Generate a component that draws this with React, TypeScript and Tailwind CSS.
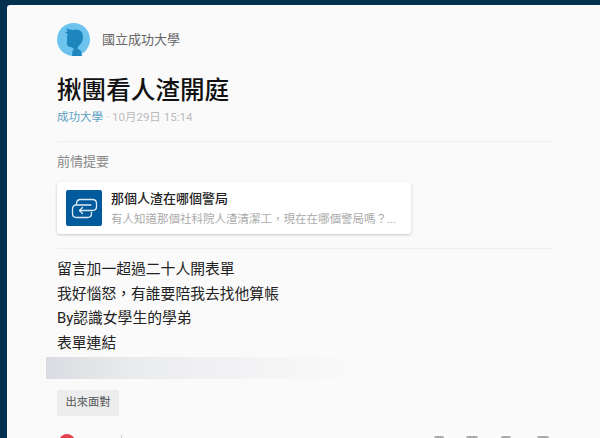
const font = { fontFamily: '"Roboto", "Noto Sans CJK TC", sans-serif' }

function Avatar() {
  return (
    <svg viewBox="0 0 33 33" className="h-[33px] w-[33px] shrink-0">
      <circle cx="16.5" cy="16.5" r="16.5" fill="#6cc3ee" />
      <path
        d="M9 5.500 L15.500 7 C21 5 26.500 8 26 14 C26 18 24.500 21 21.500 23 L20.500 25.500 L24 28 L25 33 L15 33 L15.500 28 L17 26 L14 24 C11 24 9.500 22 10 19 C10.500 16 9.500 13.500 10.500 11 L8 9 L11 8.500 Z"
        fill="#1f86bd"
      />
    </svg>
  )
}

function LinkIcon() {
  return (
    <div className="flex h-9 w-9 shrink-0 items-center justify-center rounded-[2px] bg-[#005a9c]">
      <svg viewBox="0 0 36 36" className="h-9 w-9" fill="none" stroke="#dfeaf3" strokeWidth="1.3" strokeLinecap="round" strokeLinejoin="round">
        <path d="M10.500 14 C10.500 11 12 9.500 14.500 9.500 H26.500 C29 9.500 30.500 11 30.500 13.500 V16.500 C30.500 19 29 20.500 26.500 20.500 H13.500" />
        <path d="M25 15 H10.500 C8 15 6.500 16.500 6.500 19 V23.500 C6.500 26 8 27.500 10.500 27.500 H21.500 C24 27.500 25.500 26 25.500 23.500 V22.500" />
        <path d="M16.500 17.500 L13.500 20.500 L16.500 23.500" />
      </svg>
    </div>
  )
}

export default function App() {
  return (
    <div className="h-[438px] w-[600px] overflow-hidden bg-[#02304f] pl-[7px] pt-[5px]" style={font}>
      <div className="h-[433px] w-[593px] rounded-tl-[3px] bg-[#fafafa] pl-[50px] pr-[48px] pt-[18px]">
        <div className="flex items-center gap-[12px]">
          <Avatar />
          <span className="text-[13px] leading-[17px] text-[#666]">國立成功大學</span>
        </div>

        <h1 className="mt-[18px] text-[24.6px] font-medium leading-[34px] text-[#111]">揪團看人渣開庭</h1>
        <div className="mt-[2px] text-[11.5px] leading-[15px] text-[#bbb]">
          <span className="text-[#5a9fc4]">成功大學</span>
          <span className="mx-[3px]">·</span>10月29日 15:14
        </div>

        <div className="mt-[16px] border-t border-[#eee] pt-[11px]">
          <div className="text-[13px] leading-[17px] text-[#888]">前情提要</div>
          <div className="mt-[12px] flex h-[52px] w-[354px] items-center gap-[9px] rounded-[3px] bg-white pl-[9px] shadow-[0_1px_3px_rgba(0,0,0,0.2)]">
            <LinkIcon />
            <div className="min-w-0">
              <div className="text-[13px] font-medium leading-[17px] text-[#222]">那個人渣在哪個警局</div>
              <div className="mt-[5px] whitespace-nowrap text-[11.5px] leading-[15px] text-[#aaa]">有人知道那個社科院人渣清潔工，現在在哪個警局嗎？...</div>
            </div>
          </div>
        </div>

        <div className="mt-[14px] border-t border-[#eee] pt-[8px] text-[14.8px] leading-[24.6px] text-[#222]">
          <div>留言加一超過二十人開表單</div>
          <div>我好惱怒，有誰要陪我去找他算帳</div>
          <div>By認識女學生的學弟</div>
          <div>表單連結</div>
        </div>

        <div className="-ml-[11px] mt-[2px] h-[22px] w-[311px] bg-gradient-to-r from-[#dadce1] via-[#ebecef] via-30% to-[#fafafa]" />

        <div className="mt-[11px] flex h-[26px] w-[62px] items-center justify-center rounded-[2px] bg-[#ededed] text-[11.3px] text-[#555]">出來面對</div>

        <div className="relative mt-[18px] flex h-[16px] items-start">
          <div className="ml-[2px] h-[16px] w-[16px] rounded-full bg-[#e5404f]" />
          <div className="ml-[46px] mt-[1px] h-[6px] w-px bg-[#ccc]" />
          <div className="ml-[312px] mt-[2px] h-[10px] w-[10px] rounded-[2px] bg-[#aaa]" />
          <div className="ml-[22px] mt-[2px] h-[10px] w-[12px] rounded-[2px] bg-[#aaa]" />
          <div className="ml-[23px] mt-[2px] h-[10px] w-[10px] rounded-[2px] bg-[#aaa]" />
          <div className="ml-[26px] mt-[2px] h-[10px] w-[12px] rounded-[2px] bg-[#aaa]" />
        </div>
      </div>
    </div>
  )
}
